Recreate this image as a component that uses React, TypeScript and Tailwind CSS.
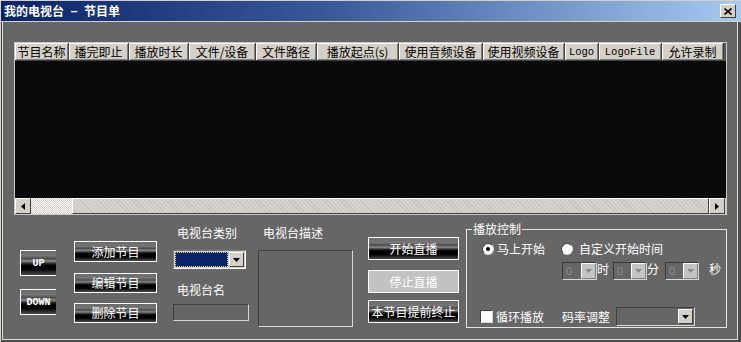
import React from "react";

function Arrow({ color = "#000", dir = "down" }: { color?: string; dir?: "down" | "left" | "right" }) {
  if (dir === "left")
    return (
      <svg width="4" height="7" viewBox="0 0 4 7">
        <path d="M4 0V7L0 3.5Z" fill={color} />
      </svg>
    );
  if (dir === "right")
    return (
      <svg width="4" height="7" viewBox="0 0 4 7">
        <path d="M0 0V7L4 3.5Z" fill={color} />
      </svg>
    );
  return (
    <svg width="7" height="4" viewBox="0 0 7 4">
      <path d="M0 0H7L3.5 4Z" fill={color} />
    </svg>
  );
}

const headers: { t: string; w: string; mono?: boolean }[] = [
  { t: "节目名称", w: "w-[54px]" },
  { t: "播完即止", w: "w-[60px]" },
  { t: "播放时长", w: "w-[60px]" },
  { t: "文件/设备", w: "w-[67px]" },
  { t: "文件路径", w: "w-[61px]" },
  { t: "播放起点(s)", w: "w-[82px]" },
  { t: "使用音频设备", w: "w-[84px]" },
  { t: "使用视频设备", w: "w-[82px]" },
  { t: "Logo", w: "w-[34px]", mono: true },
  { t: "LogoFile", w: "w-[63px]", mono: true },
  { t: "允许录制", w: "w-[62px]" },
];

function MetalButton({ label, cls }: { label: string; cls: string }) {
  return (
    <div
      className={`${cls} flex items-center justify-center border border-white text-white text-[12px] leading-[14px] bg-[linear-gradient(180deg,#6a6a6a_0%,#767676_22%,#4c4c4c_34%,#8a8a8a_44%,#2e2e2e_54%,#000000_62%,#000000_78%,#2a2a2a_90%,#4a4a4a_100%)]`}
    >
      {label}
    </div>
  );
}

function SmallCombo({ w }: { w: string }) {
  return (
    <div className={`${w} h-[18px] flex border-t border-l border-t-[#3a3a3a] border-l-[#3a3a3a] border-r border-b border-r-[#d8d8d8] border-b-[#d8d8d8]`}>
      <div className="flex-1 bg-[#666666] text-[#8c8c8c] text-[11px] leading-[16px] pl-[3px] font-['Liberation_Sans',sans-serif]">0</div>
      <div className="w-[15px] flex items-center justify-center bg-[#c4c4c4] border-t border-l border-white border-r border-b border-r-[#808080] border-b-[#808080]">
        <Arrow color="#8a8a8a" />
      </div>
    </div>
  );
}

export default function App() {
  return (
    <div className="w-[741px] h-[342px] flex flex-col bg-[#4c4c4c] border-l border-[#d4d0c8] overflow-hidden font-['Noto_Sans_CJK_SC',sans-serif]">
      {/* title bar */}
      <div className="h-[22px] shrink-0 border-t border-b border-[#d4d0c8] flex items-center justify-between pl-[3px] pr-[5px] bg-[linear-gradient(90deg,#0a246a_0%,#3a5a9a_45%,#a6caf0_100%)]">
        <div className="flex items-center text-white font-bold text-[12px] leading-[14px]">
          <span>我的电视台</span>
          <span className="inline-block w-[20px] text-center font-['Liberation_Sans',sans-serif]">–</span>
          <span>节目单</span>
        </div>
        <div className="w-[16px] h-[14px] flex items-center justify-center bg-[#d4d0c8] border-t border-l border-white border-r border-b border-r-[#404040] border-b-[#404040]">
          <svg width="8" height="7" viewBox="0 0 8 7">
            <path d="M0.5 0.5L7.5 6.5M7.5 0.5L0.5 6.5" stroke="#000" strokeWidth="1.6" />
          </svg>
        </div>
      </div>

      {/* body */}
      <div className="flex-1 ml-[1px] mr-[3px] mb-[2px] border-l border-r border-b border-[#dcdcdc] bg-[#666666] pl-[11px] pt-[20px] flex flex-col">
        {/* list */}
        <div className="w-[713px] h-[173px] shrink-0 border border-[#c8c8c8] flex flex-col bg-[#0a0a0a]">
          <div className="h-[18px] flex bg-[#555555]">
            {headers.map((h) => (
              <div
                key={h.t}
                className={`${h.w} h-[18px] flex items-center justify-center bg-[#d4d0c8] text-black border-r border-b border-[#404040] shadow-[inset_1px_1px_#ffffff,inset_-1px_-1px_#808080] ${h.mono ? "font-['Liberation_Mono',monospace] text-[10.5px]" : "text-[12px]"} leading-[14px] whitespace-nowrap`}
              >
                {h.t}
              </div>
            ))}
          </div>
          <div className="flex-1" />
          <div className="h-[16px] flex">
            <div className="w-[16px] flex items-center justify-center bg-[#d4d0c8] border-t border-l border-white border-r border-b border-r-[#404040] border-b-[#404040]">
              <Arrow dir="left" />
            </div>
            <div className="w-[41px] bg-[repeating-conic-gradient(#ffffff_0%_25%,#d4d0c8_0%_50%)] bg-[length:2px_2px]" />
            <div className="flex-1 border-t border-l border-white border-r border-b border-r-[#404040] border-b-[#404040] bg-[repeating-linear-gradient(45deg,#d6d4cc_0px,#d6d4cc_2px,#c6c4bc_2px,#c6c4bc_3px)]" />
            <div className="w-[16px] flex items-center justify-center bg-[#d4d0c8] border-t border-l border-white border-r border-b border-r-[#404040] border-b-[#404040]">
              <Arrow dir="right" />
            </div>
            <div className="w-[1px] bg-[#d4d0c8]" />
          </div>
        </div>

        {/* controls */}
        <div className="flex items-start">
          {/* up/down */}
          <div className="ml-[6px] mt-[35px] w-[36px] flex flex-col">
            <div className="h-[26px] flex items-center justify-center border-t border-l border-b border-white text-white text-[10px] font-bold font-['Liberation_Mono',monospace] bg-[linear-gradient(180deg,#6a6a6a_0%,#767676_20%,#4c4c4c_32%,#8a8a8a_42%,#2e2e2e_52%,#000000_60%,#000000_76%,#2a2a2a_88%,#4a4a4a_100%)]">UP</div>
            <div className="mt-[13px] h-[26px] flex items-center justify-center border-t border-l border-b border-white text-white text-[10px] font-bold font-['Liberation_Mono',monospace] bg-[linear-gradient(180deg,#6a6a6a_0%,#767676_20%,#4c4c4c_32%,#8a8a8a_42%,#2e2e2e_52%,#000000_60%,#000000_76%,#2a2a2a_88%,#4a4a4a_100%)]">DOWN</div>
          </div>

          {/* program buttons */}
          <div className="ml-[18px] mt-[26px] w-[83px] flex flex-col">
            <MetalButton label="添加节目" cls="h-[21px]" />
            <div className="h-[11px]" />
            <MetalButton label="编辑节目" cls="h-[20px]" />
            <div className="h-[10px]" />
            <MetalButton label="删除节目" cls="h-[20px]" />
          </div>

          {/* station type / name */}
          <div className="ml-[16px] mt-[11px] w-[76px] flex flex-col text-white text-[12px] leading-[14px]">
            <div className="pl-[4px]">电视台类别</div>
            <div className="mt-[10px] w-[73px] h-[19px] flex border-t border-l border-t-[#808080] border-l-[#808080] border-r border-b border-r-white border-b-white bg-[#d4d0c8]">
              <div className="flex-1 m-[1px] bg-[#0a246a] border border-dotted border-[#e8e070]" />
              <div className="w-[15px] my-[1px] mr-[1px] flex items-center justify-center bg-[#d4d0c8] border-t border-l border-white border-r border-b border-r-[#404040] border-b-[#404040]">
                <Arrow />
              </div>
            </div>
            <div className="mt-[14px] pl-[4px]">电视台名</div>
            <div className="mt-[7px] h-[17px] border-t border-l border-[#404040] border-r border-b border-r-[#d8d8d8] border-b-[#d8d8d8] bg-[#666666]" />
          </div>

          {/* description */}
          <div className="ml-[9px] mt-[11px] w-[95px] flex flex-col text-white text-[12px] leading-[14px]">
            <div className="pl-[5px]">电视台描述</div>
            <div className="mt-[10px] h-[77px] border-t border-l border-[#404040] border-r border-b border-r-[#d8d8d8] border-b-[#d8d8d8] bg-[#666666]" />
          </div>

          {/* live buttons */}
          <div className="ml-[15px] mt-[22px] w-[91px] flex flex-col">
            <MetalButton label="开始直播" cls="h-[23px]" />
            <div className="h-[10px]" />
            <div className="h-[23px] flex items-center justify-center border border-white text-white text-[12px] leading-[14px] bg-[repeating-conic-gradient(#c8c8c8_0%_25%,#bcbcbc_0%_50%)] bg-[length:2px_2px]">
              停止直播
            </div>
            <div className="h-[7px]" />
            <MetalButton label="本节目提前终止" cls="h-[23px]" />
          </div>

          {/* play control group */}
          <div className="relative ml-[7px] mt-[14px] w-[261px] h-[99px] border border-[#e6e6e6] flex flex-col text-white text-[12px] leading-[14px]">
            <div className="absolute -top-[8px] left-[5px] px-[1px] bg-[#666666]">播放控制</div>
            <div className="mt-[12px] pl-[15px] h-[14px] flex items-center">
              <div className="w-[12px] h-[12px] rounded-full bg-white border border-t-[#404040] border-l-[#404040] border-r-[#d8d8d8] border-b-[#d8d8d8] flex items-center justify-center">
                <div className="w-[4px] h-[4px] rounded-full bg-black" />
              </div>
              <div className="ml-[3px]">马上开始</div>
              <div className="ml-[16px] w-[12px] h-[12px] rounded-full bg-white border border-t-[#404040] border-l-[#404040] border-r-[#d8d8d8] border-b-[#d8d8d8]" />
              <div className="ml-[6px]">自定义开始时间</div>
            </div>
            <div className="mt-[6px] pl-[95px] flex items-start">
              <SmallCombo w="w-[35px]" />
              <div className="w-[12px]">时</div>
              <div className="ml-[4px]" />
              <SmallCombo w="w-[34px]" />
              <div className="w-[12px]">分</div>
              <div className="ml-[6px]" />
              <SmallCombo w="w-[34px]" />
              <div className="ml-[10px]">秒</div>
            </div>
            <div className="mt-[27px] pl-[13px] flex items-center h-[19px]">
              <div className="w-[13px] h-[13px] bg-white border border-t-[#404040] border-l-[#404040] border-r-[#d8d8d8] border-b-[#d8d8d8]" />
              <div className="ml-[3px]">循环播放</div>
              <div className="ml-[18px]">码率调整</div>
              <div className="ml-[6px] w-[79px] h-[19px] flex border-t border-l border-t-[#404040] border-l-[#404040] border-r border-b border-r-[#d8d8d8] border-b-[#d8d8d8]">
                <div className="flex-1 bg-[#666666]" />
                <div className="w-[15px] my-[1px] mr-[1px] flex items-center justify-center bg-[#d4d0c8] border-t border-l border-white border-r border-b border-r-[#404040] border-b-[#404040]">
                  <Arrow />
                </div>
              </div>
            </div>
          </div>
        </div>
      </div>
    </div>
  );
}
